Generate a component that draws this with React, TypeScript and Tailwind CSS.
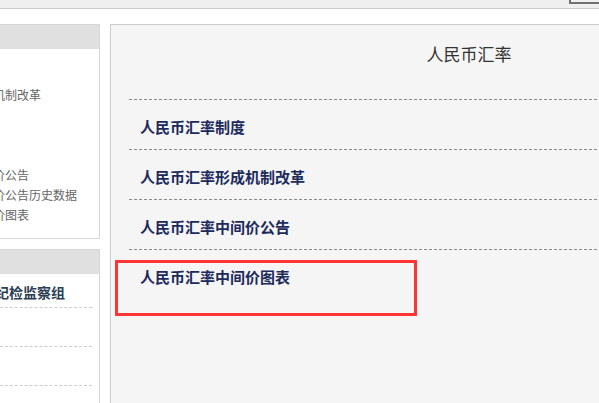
import React from 'react';

// empty strings are rows whose text sits entirely past the left edge
const leftLinks = [
  '',
  '人民币汇率形成机制改革',
  '',
  '',
  '',
  '人民币汇率中间价公告',
  '人民币汇率中间价公告历史数据',
  '人民币汇率中间价图表',
];

const mainLinks = [
  '人民币汇率制度',
  '人民币汇率形成机制改革',
  '人民币汇率中间价公告',
  '人民币汇率中间价图表',
];

export default function App() {
  return (
    <div className="relative w-[599px] h-[403px] overflow-hidden bg-white font-['Noto_Sans_CJK_SC','Noto_Sans',sans-serif]">
      {/* top strip */}
      <div className="flex h-[9px] bg-[#efefef] border-b border-[#cccccc]">
        <div className="ml-auto w-[30px] h-[4px] border-l-2 border-b-2 border-[#707070]" />
      </div>

      <div className="flex gap-[10px] ml-[-120px] mt-[15px]">
        {/* left column */}
        <div className="flex flex-col gap-[10px] w-[220px] shrink-0">
          <div className="h-[215px] border border-[#d6d6d6] bg-white">
            <div className="h-[24px] bg-[#e0e0e0]" />
            <ul className="pt-[16px] pl-[28px]">
              {leftLinks.map((t, i) => (
                <li key={i} className="h-[20px] leading-[20px] text-[12px] text-[#666666] whitespace-nowrap">
                  {t}
                </li>
              ))}
            </ul>
          </div>

          <div className="h-[200px] border border-[#d6d6d6] bg-white">
            <div className="h-[24px] bg-[#e0e0e0]" />
            <div className="mr-[7px]">
              <div className="h-[34px] pt-[8px] pl-[44px] border-b border-dashed border-[#cccccc] text-[14px] leading-[20px] font-bold text-[#2c3e55] whitespace-nowrap">
                驻人民银行纪检监察组
              </div>
              <div className="h-[39px] border-b border-dashed border-[#cccccc]" />
              <div className="h-[39px] border-b border-dashed border-[#cccccc]" />
            </div>
          </div>
        </div>

        {/* main panel */}
        <div className="w-[718px] h-[420px] shrink-0 border border-[#cccccc] bg-[#f5f5f5]">
          <h1 className="pt-[17px] h-[74px] text-center text-[17px] leading-[24px] text-[#333333]">
            人民币汇率
          </h1>
          <ul className="ml-[18px]">
            {mainLinks.map((t) => (
              <li
                key={t}
                className="h-[50px] pt-[17px] pl-[11px] border-t border-dashed border-[#8a8a8a] text-[15px] leading-[20px] font-bold text-[#1d2a5c]"
              >
                {t}
              </li>
            ))}
          </ul>
        </div>
      </div>

      {/* highlight annotation */}
      <div className="absolute left-[115px] top-[260px] w-[302px] h-[56px] border-[3px] border-[#ff3535]" />
    </div>
  );
}
